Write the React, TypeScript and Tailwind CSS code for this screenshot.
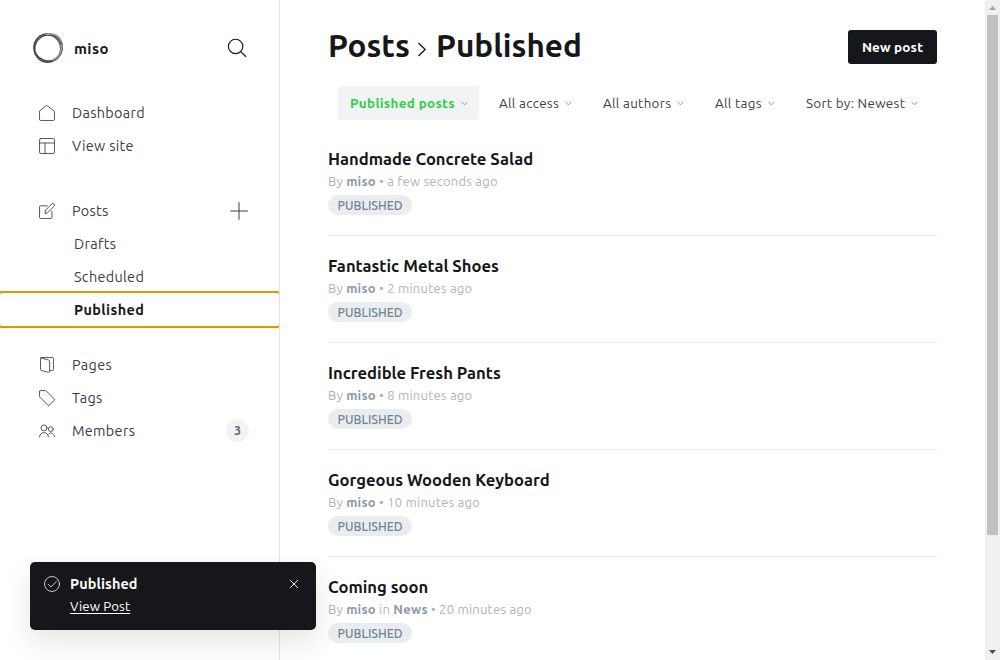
import React from "react";

const posts = [
  { title: "Handmade Concrete Salad", time: "a few seconds ago" },
  { title: "Fantastic Metal Shoes", time: "2 minutes ago" },
  { title: "Incredible Fresh Pants", time: "8 minutes ago" },
  { title: "Gorgeous Wooden Keyboard", time: "10 minutes ago" },
  { title: "Coming soon", tag: "News", time: "20 minutes ago" },
];

const filters = [
  { label: "Published posts", cls: "w-[141px] rounded-[2px] bg-[#f1f3f4] font-bold text-[#30cf43] tracking-[0.35px]" },
  { label: "All access", cls: "w-[96px] text-[#394047] tracking-[0.3px]" },
  { label: "All authors", cls: "w-[104px] text-[#394047] tracking-[0.3px]" },
  { label: "All tags", cls: "w-[83px] text-[#394047] tracking-[0.3px]" },
  { label: "Sort by: Newest", cls: "w-[135px] text-[#394047] tracking-[0.3px]" },
];

function Chevron() {
  return (
    <svg className="h-[5px] w-[7px] shrink-0" viewBox="0 0 7 5" fill="none" stroke="#8e959b">
      <path d="M.5 .8 3.5 3.9 6.5 .8" />
    </svg>
  );
}

function Icon({ children }: { children: React.ReactNode }) {
  return (
    <svg className="h-4 w-4 shrink-0" viewBox="0 0 24 24" fill="none" stroke="#394047" strokeWidth="1.3" strokeLinecap="round" strokeLinejoin="round">
      {children}
    </svg>
  );
}

function NavItem({ icon, label, children }: { icon: React.ReactNode; label: string; children?: React.ReactNode }) {
  return (
    <div className="flex h-[33px] items-center pl-[39px] pr-[30px]">
      {icon}
      <span className="ml-[17px] flex-1 pt-[2px]">{label}</span>
      {children}
    </div>
  );
}

function Sidebar() {
  return (
    <aside className="flex w-[280px] shrink-0 flex-col overflow-hidden border-r border-[#e1e3e5] text-[14.4px] tracking-[0.33px] text-[#394047]">
      <header className="flex h-[96px] items-center pl-8 pr-8">
        <svg className="h-8 w-8" viewBox="0 0 32 32" fill="none">
          <circle cx="16" cy="16" r="13.7" stroke="#8b8d8f" strokeWidth="2.3" />
          <ellipse cx="15.6" cy="15.6" rx="14.2" ry="13.2" stroke="#404244" strokeWidth="1" transform="rotate(35 16 16)" />
          <ellipse cx="16.5" cy="16.4" rx="14.5" ry="13" stroke="#55585a" strokeWidth=".9" transform="rotate(-35 16 16)" />
          <ellipse cx="15.3" cy="16.8" rx="13.2" ry="13.8" stroke="#303234" strokeWidth=".8" />
          <path d="M14 2.4c7-2 14.5 2 15 7.3M29.3 12c1.5 7-3.3 14.3-9 16.1" stroke="#96999b" strokeWidth="1.7" />
        </svg>
        <span className="ml-[10px] flex-1 pt-[2px] text-[15px] font-bold tracking-[0.4px] text-[#15171a]">miso</span>
        <svg className="h-5 w-5" viewBox="0 0 20 20" fill="none" stroke="#15171a" strokeWidth="1.15" strokeLinecap="round">
          <circle cx="8.6" cy="8.4" r="7.2" />
          <path d="m13.8 13.6 5 4.9" />
        </svg>
      </header>

      <nav className="flex flex-col">
        <NavItem label="Dashboard" icon={<Icon><path d="M.8 9.5v12.2c0 .8.6 1.5 1.5 1.5h19.4c.8 0 1.5-.7 1.5-1.5V9.5L12 .8z" /></Icon>} />
        <NavItem label="View site" icon={<Icon><rect x=".8" y=".8" width="22.4" height="22.4" rx="2" /><path d="M.8 7.5h22.4M9 7.5v15.7" /></Icon>} />
        <div className="h-8" />
        <NavItem label="Posts" icon={<Icon><path d="M12.5 4.2H2.2C1.4 4.2.8 4.8.8 5.6v16.2c0 .8.6 1.4 1.4 1.4H18c.8 0 1.4-.6 1.4-1.4v-9.3M9 15.2l1-4.7 9-9a2.4 2.4 0 0 1 3.5 3.5l-9.1 9.1z" /></Icon>}>
          <svg className="mr-px h-[18px] w-[18px] shrink-0" viewBox="0 0 18 18" fill="none" stroke="#394047"><path d="M9 .2v17.6M.2 9h17.6" /></svg>
        </NavItem>
        <div className="flex h-[33px] items-center pl-[74px] pt-[2px]">Drafts</div>
        <div className="flex h-[33px] items-center pl-[74px] pt-[2px]">Scheduled</div>
        <div className="-my-[2px] -ml-[2px] flex h-[37px] w-[283px] shrink-0 items-center rounded-[4px] border-2 border-[#e59700] pl-[74px] pt-[2px] font-bold tracking-[0.4px] text-[#15171a]">Published</div>
        <div className="h-[22px]" />
        <NavItem label="Pages" icon={<Icon><path d="M2.3 1.2 14.5 4.6c.8.2 1.4.9 1.4 1.7v15.600c0 .8-.6 1.300-1.400 1.100L3.400 20.200c-.7-.2-1.100-.7-1.100-1.400V2.200c0-.8.5-1.400 1.300-1.400h16.700c.8 0 1.400.6 1.400 1.400V19c0 .8-.6 1.400-1.400 1.400h-4.400" /></Icon>} />
        <NavItem label="Tags" icon={<Icon><path d="M.8 2.2v7.3c0 .5.2 1 .6 1.4l12 12c.6.5 1.4.5 2 0l7.5-7.5c.5-.6.5-1.4 0-2l-12-12a2 2 0 0 0-1.4-.6H2.2C1.4.8.8 1.4.8 2.2z" /></Icon>} />
        <NavItem label="Members" icon={<Icon><circle cx="7.5" cy="7.4" r="4.5" /><circle cx="17.7" cy="9.2" r="3.6" /><path d="M.8 21c0-9 13.2-9 13.2 0M14.5 16.5c3.6-3.5 8.7-.8 8.7 4.2" /></Icon>}>
          <span className="flex h-[23px] w-[23px] items-center justify-center rounded-full bg-[#f1f3f4] text-[12.5px] font-semibold tracking-normal text-[#5d6b79]">3</span>
        </NavItem>
      </nav>
    </aside>
  );
}

function Toast() {
  return (
    <div className="absolute left-[30px] top-[562px] flex h-[68px] w-[286px] items-start rounded-[5px] bg-[#15171a] pl-[14px] pr-[17px] pt-[12px] text-white shadow-[0_12px_30px_rgba(0,0,0,0.11)]">
      <svg className="mt-[2px] h-4 w-4 shrink-0" viewBox="0 0 16 16" fill="none" stroke="#fff" strokeWidth=".75" strokeLinecap="round">
        <circle cx="8" cy="8" r="7.5" />
        <path d="m4.2 8.3 2.7 2.7 5.4-5.5" />
      </svg>
      <div className="ml-[10px] flex-1">
        <div className="h-5 text-[14.4px] font-bold leading-5 tracking-[0.1px]">Published</div>
        <div className="mt-[3px] text-[13.3px] leading-[20px] tracking-[0.1px] underline underline-offset-[2px]">View Post</div>
      </div>
      <svg className="mt-[5px] h-[10px] w-[10px]" viewBox="0 0 10 10" fill="none" stroke="#fff" strokeWidth=".9"><path d="m1 1 8 8M9 1 1 9" /></svg>
    </div>
  );
}

function Scrollbar() {
  return (
    <div className="flex w-[15px] shrink-0 flex-col items-center bg-[#f0f0f0]">
      <svg className="h-[15px] w-[15px]" viewBox="0 0 15 15"><path d="M4 10h7L7.5 6z" fill="#a5a5a5" /></svg>
      <div className="h-[520px] w-[11px] bg-[#c1c1c1]" />
      <div className="flex-1" />
      <svg className="h-[15px] w-[15px]" viewBox="0 0 15 15"><path d="M4 5h7L7.5 9z" fill="#505050" /></svg>
    </div>
  );
}

export default function App() {
  return (
    <div className="relative flex h-[660px] w-[1000px] overflow-hidden bg-white font-[Ubuntu,'Noto_Sans',sans-serif]">
      <Sidebar />
      <main className="flex min-w-0 flex-1 flex-col pl-12 pr-12">
        <header className="mt-[24px] flex h-[46px] items-center text-[31.5px] font-bold text-[#15171a]">
          <h1 className="w-[89px] whitespace-nowrap pb-[2px]">Posts</h1>
          <svg className="mt-[4px] h-[15px] w-[10px]" viewBox="0 0 10 15" fill="none" stroke="#15171a" strokeWidth="1.3"><path d="m1.5 1 6.7 6.5-6.7 6.5" /></svg>
          <h1 className="ml-[9px] flex-1 whitespace-nowrap pb-[2px]">Published</h1>
          <button className="flex h-[34px] w-[89px] items-center justify-center rounded-[3px] bg-[#15171a] text-[13.5px] font-semibold tracking-[0.15px] text-white">New post</button>
        </header>
        <div className="mt-[16px] flex h-[34px] shrink-0 gap-2 pl-[10px] text-[13.4px]">
          {filters.map((f) => (
            <div key={f.label} className={`flex shrink-0 items-center justify-between whitespace-nowrap pl-3 pr-[11px] ${f.cls}`}>
              <span className="pt-[2px]">{f.label}</span>
              <Chevron />
            </div>
          ))}
        </div>
        <div className="mt-[9px] flex flex-col">
          {posts.map((p) => (
            <article key={p.title} className="flex h-[107px] shrink-0 flex-col items-start border-b border-[#e9ebed] pt-[19px]">
              <h3 className="h-[22px] whitespace-nowrap text-[16.6px] font-bold leading-[22px] text-[#15171a]">{p.title}</h3>
              <p className="mt-px h-5 whitespace-nowrap text-[13px] leading-5 tracking-[0.23px] text-[#abb4be]">
                By <b className="font-semibold text-[#8c9aa8]">miso</b>{p.tag && <> in <b className="font-semibold text-[#8c9aa8]">{p.tag}</b></>} • {p.time}
              </p>
              <span className="mt-1 flex h-5 w-[84px] items-center justify-center rounded-full bg-[#e9edf0] pt-[2px] text-[12.3px] font-medium text-[#738393]">PUBLISHED</span>
            </article>
          ))}
        </div>
      </main>
      <Scrollbar />
      <Toast />
    </div>
  );
}
